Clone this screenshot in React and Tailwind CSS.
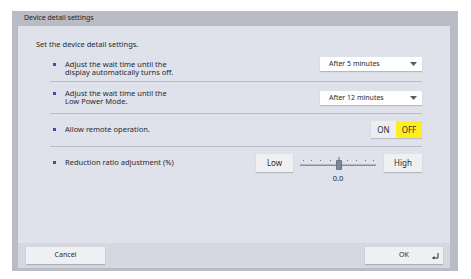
import React from 'react';

const font = { fontFamily: '"Noto Sans", "Open Sans", sans-serif' };

function Bullet() {
    return <span className="block w-[3px] h-[3px] bg-[#3d50b8] mt-[3px] ml-[3px] mr-[9px] shrink-0" />;
}

function Dropdown({ label }) {
    return (
        <div className="w-[102px] h-[14px] bg-white shadow-[0_1px_1px_rgba(0,0,0,0.18)] flex items-center justify-between pl-[9px] pr-[5px]">
            <span className="text-[7px] leading-[8px] text-[#2a2a2a]">{label}</span>
            <svg width="7" height="4" viewBox="0 0 7 4">
                <path d="M0 0 L7 0 L3.5 4 Z" fill="#5a5a5a" />
            </svg>
        </div>
    );
}

function SoftButton({ children, className }) {
    return (
        <div className={`bg-[#eff0f3] shadow-[0_1px_1px_rgba(0,0,0,0.18)] flex items-center justify-center text-[#2a2a2a] ${className}`}>
            {children}
        </div>
    );
}

function Slider() {
    const dots = [3, 11, 20, 30, 47, 56, 65, 73];
    return (
        <div className="w-[76px] flex flex-col items-center">
            <svg width="76" height="18" viewBox="0 0 76 18">
                {dots.map((x) => (
                    <rect key={x} x={x} y="6" width="1" height="1" fill="#6d6f78" />
                ))}
                <rect x="38.5" y="3" width="1" height="8" fill="#6d6f78" />
                <rect x="0" y="10.5" width="76" height="1.5" fill="#8e9099" />
                <rect x="36" y="6" width="6" height="10" rx="1" fill="#6b7586" />
                <rect x="37" y="7" width="4" height="8" fill="#7c8696" />
            </svg>
            <span className="text-[7.5px] leading-[8px] text-[#2a2a2a] mt-[2px]">0.0</span>
        </div>
    );
}

export default function App() {
    return (
        <div className="w-[471px] h-[279px] bg-white pt-[11px] pl-[12px]" style={font}>
            <div className="w-[446px] h-[260px] bg-[#b9bbc5] flex flex-col">
                {/* title */}
                <div className="h-[15px] pl-[12px] flex items-center text-[7px] text-[#1e1e1e]">Device detail settings</div>

                <div className="flex-1 flex flex-col ml-[6px] mr-[8px] mb-[3px]">
                    {/* content */}
                    <div className="flex-1 bg-[#dfe1eb] pt-[14px] text-[7.5px] leading-[8px] text-[#2a2a2a]">
                        <div className="ml-[18px]">Set the device detail settings.</div>

                        <div className="ml-[32px] mr-[28px]">
                            <div className="h-[34px] border-b border-[#b9bbc6] flex justify-between items-start">
                                <div className="flex items-start mt-[12px]">
                                    <Bullet />
                                    <div>
                                        <div>Adjust the wait time until the</div>
                                        <div>display automatically turns off.</div>
                                    </div>
                                </div>
                                <div className="mt-[9px]"><Dropdown label="After 5 minutes" /></div>
                            </div>

                            <div className="h-[32px] border-b border-[#b9bbc6] flex justify-between items-start">
                                <div className="flex items-start mt-[7px]">
                                    <Bullet />
                                    <div>
                                        <div>Adjust the wait time until the</div>
                                        <div>Low Power Mode.</div>
                                    </div>
                                </div>
                                <div className="mt-[9px]"><Dropdown label="After 12 minutes" /></div>
                            </div>

                            <div className="h-[33px] border-b border-[#b9bbc6] flex justify-between items-start">
                                <div className="flex items-start mt-[11px]">
                                    <Bullet />
                                    <div>Allow remote operation.</div>
                                </div>
                                <div className="mt-[7px] h-[17px] flex text-[8px] shadow-[0_1px_1px_rgba(0,0,0,0.15)]">
                                    <div className="w-[25px] bg-[#eceef2] flex items-center justify-center">ON</div>
                                    <div className="w-[26px] bg-[#ffed1f] flex items-center justify-center">OFF</div>
                                </div>
                            </div>

                            <div className="flex justify-between items-start">
                                <div className="flex items-start mt-[11px]">
                                    <Bullet />
                                    <div>Reduction ratio adjustment (%)</div>
                                </div>
                                <div className="mt-[7px] flex items-start">
                                    <SoftButton className="w-[37px] h-[18px] text-[8px]">Low</SoftButton>
                                    <div className="ml-[7px]"><Slider /></div>
                                    <SoftButton className="w-[38px] h-[18px] ml-[8px] text-[8px]">High</SoftButton>
                                </div>
                            </div>
                        </div>
                    </div>

                    {/* footer */}
                    <div className="h-[25px] bg-[#d5d7e1] flex items-center justify-between pl-[8px] pr-[7px]">
                        <SoftButton className="w-[79px] h-[17px] text-[7px]">Cancel</SoftButton>
                        <SoftButton className="w-[78px] h-[17px] text-[7px] relative">
                            OK
                            <svg className="absolute right-[4px] top-[6px]" width="7" height="6" viewBox="0 0 7 6">
                                <path d="M6 0 V5 H1.5" fill="none" stroke="#333" strokeWidth="1" />
                                <path d="M0 5 L2.5 3 L2.5 7 Z" fill="#333" />
                            </svg>
                        </SoftButton>
                    </div>
                </div>
            </div>
        </div>
    );
}
